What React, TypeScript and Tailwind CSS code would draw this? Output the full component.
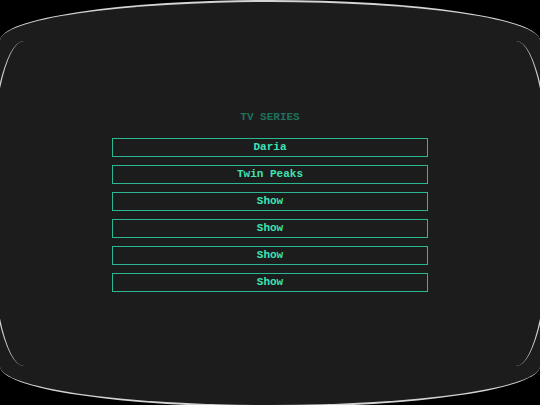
/**
 * App — CRT screen with a list of TV series
 */

const shows = ['Daria', 'Twin Peaks', 'Show', 'Show', 'Show', 'Show'];

export default function App() {
  return (
    <div className="w-[540px] h-[405px] bg-black overflow-hidden">
      {/* Screen */}
      <div className="relative w-[540px] h-[407px] bg-[#1c1c1c] rounded-[50%/10%] border-t-2 border-b-2 border-[#d4d4d4]">
        <div className="absolute top-[39px] bottom-[39px] -left-[12px] -right-[12px] bg-[#1c1c1c] rounded-[36px/50%] border-l-2 border-r-2 border-[#cfcfcf]" />

        {/* Menu */}
        <div className="relative flex flex-col items-center pt-[108px] font-['Liberation_Mono',monospace] text-[11px] font-bold">
          <h1 className="h-[14px] leading-[14px] text-[#1f6f5b]">TV SERIES</h1>
          <div className="mt-[14px] flex flex-col gap-[8px]">
            {shows.map((name, i) => (
              <button
                key={i}
                className="w-[316px] h-[19px] border border-[#2ab892] text-[#3ee3b3] leading-[17px] text-center"
              >
                {name}
              </button>
            ))}
          </div>
        </div>
      </div>
    </div>
  );
}
